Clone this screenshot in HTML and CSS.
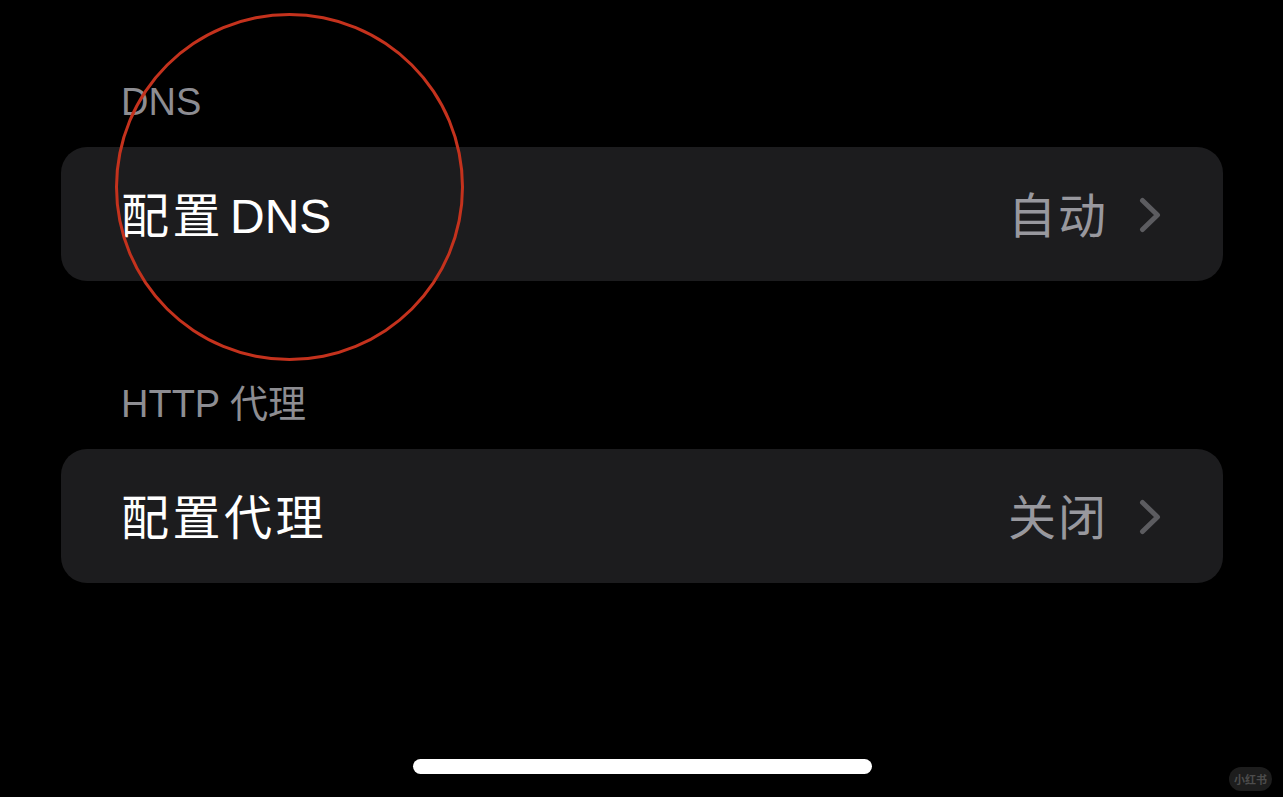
FILE: index.html
```html
<!DOCTYPE html>
<html lang="zh-CN">
<head>
    <meta charset="UTF-8">
    <meta name="viewport" content="width=device-width, initial-scale=1.0">
    <title>DNS</title>
    <link rel="stylesheet" href="styles.css">
</head>
<body>
    <div class="screen">
        <div class="group">
            <div class="group-title">DNS</div>
            <div class="card">
                <span class="row-label"><span class="cjk">配置</span>DNS</span>
                <span class="row-right">
                    <span class="row-value">自动</span>
                    <svg class="chevron" width="24" height="36" viewBox="0 0 24 36">
                        <polyline points="4.5,3.5 19.5,18 4.5,32.5" fill="none" stroke="#5c5c60" stroke-width="5" stroke-linecap="round" stroke-linejoin="round"/>
                    </svg>
                </span>
            </div>
        </div>

        <div class="group group-second">
            <div class="group-title">HTTP 代理</div>
            <div class="card">
                <span class="row-label"><span class="cjk">配置代理</span></span>
                <span class="row-right">
                    <span class="row-value">关闭</span>
                    <svg class="chevron" width="24" height="36" viewBox="0 0 24 36">
                        <polyline points="4.5,3.5 19.5,18 4.5,32.5" fill="none" stroke="#5c5c60" stroke-width="5" stroke-linecap="round" stroke-linejoin="round"/>
                    </svg>
                </span>
            </div>
        </div>

        <div class="home-bar"></div>

        <!-- red hand-drawn mark over the first row -->
        <div class="mark"></div>
        <div class="watermark">小红书</div>
    </div>
</body>
</html>
```

FILE: styles.css
```css
html, body {
    margin: 0;
    padding: 0;
    background: #000;
}

body {
    font-family: "Liberation Sans", "Noto Sans CJK SC", sans-serif;
    color: #fff;
    overflow: hidden;
}

.screen {
    position: relative;
    width: 1283px;
    height: 797px;
    padding: 79px 60px 0 61px;
    box-sizing: border-box;
    display: flex;
    flex-direction: column;
}

.group-second {
    margin-top: 100px;
}

.group-title {
    height: 46px;
    line-height: 46px;
    font-size: 38px;
    color: #8d8d92;
    padding-left: 60px;
    margin-bottom: 22px;
    white-space: nowrap;
}

.card {
    height: 134px;
    background: #1c1c1e;
    border-radius: 26px;
    display: flex;
    align-items: center;
    justify-content: space-between;
    padding: 0 61px 0 60px;
    box-sizing: border-box;
}

.row-label {
    font-size: 48px;
    color: #fff;
    white-space: nowrap;
    margin-bottom: 5px;
}

.row-label .cjk {
    letter-spacing: 3.5px;
    margin-right: 6px;
}

.row-right {
    display: flex;
    align-items: center;
    gap: 30px;
}

.row-value {
    font-size: 48px;
    color: #98989e;
    letter-spacing: 2px;
    margin-bottom: 4px;
}

.chevron {
    display: block;
    margin-top: 2px;
}

.home-bar {
    width: 459px;
    height: 15px;
    background: #fff;
    border-radius: 8px;
    margin: 176px 0 0 352px;
}

.mark {
    position: absolute;
    left: 115px;
    top: 13px;
    width: 343px;
    height: 342px;
    border: 3px solid #c4321d;
    border-radius: 50%;
}

.watermark {
    position: absolute;
    right: 11px;
    bottom: 6px;
    width: 43px;
    height: 24px;
    border-radius: 12px;
    background: #1d1d1d;
    color: #4c4c4c;
    font-size: 11px;
    font-weight: bold;
    line-height: 24px;
    text-align: center;
    font-family: "Noto Sans CJK SC", sans-serif;
}
```
